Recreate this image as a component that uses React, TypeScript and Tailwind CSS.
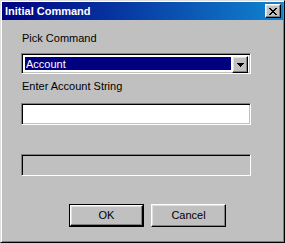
import React from 'react';

const font = "font-['Liberation_Sans',Arial,sans-serif]";

const raised =
  'border border-t-white border-l-white border-r-black border-b-black shadow-[inset_-1px_-1px_0_#808080,inset_1px_1px_0_#dfdfdf] bg-[#c0c0c0]';

const sunken =
  'border border-t-[#808080] border-l-[#808080] border-r-white border-b-white shadow-[inset_1px_1px_0_#000,inset_-1px_-1px_0_#c0c0c0]';

const CloseIcon = () => (
  <svg width="8" height="7" viewBox="0 0 8 7" shapeRendering="crispEdges">
    <path
      d="M0 0h2v1H0zM6 0h2v1H6zM1 1h2v1H1zM5 1h2v1H5zM2 2h4v1H2zM3 3h2v1H3zM2 4h4v1H2zM1 5h2v1H1zM5 5h2v1H5zM0 6h2v1H0zM6 6h2v1H6z"
      fill="#000"
    />
  </svg>
);

const DownArrow = () => (
  <svg width="7" height="4" viewBox="0 0 7 4" shapeRendering="crispEdges">
    <path d="M0 0h7v1H0zM1 1h5v1H1zM2 2h3v1H2zM3 3h1v1H3z" fill="#000" />
  </svg>
);

export default function App() {
  return (
    <div
      className={`${font} w-[285px] h-[243px] bg-[#c0c0c0] text-[11px] text-black flex flex-col p-px border border-t-[#dfdfdf] border-l-[#dfdfdf] border-r-black border-b-black shadow-[inset_1px_1px_0_#fff,inset_-1px_-1px_0_#808080]`}
    >
      {/* title bar */}
      <div className="h-[18px] flex items-center justify-between pl-[3px] pr-[2px] bg-[linear-gradient(to_right,#000080,#1084d0)]">
        <span className="text-white font-bold text-[11px] leading-none">Initial Command</span>
        <button className={`${raised} w-4 h-[14px] flex items-center justify-center`}>
          <CloseIcon />
        </button>
      </div>

      <div className="flex flex-col pl-[19px]">
        <div className="mt-[12px] h-[13px] leading-[13px] pl-px">Pick Command</div>

        <div className={`${sunken} mt-[8px] w-[230px] h-[21px] p-[2px] bg-white flex`}>
          <div className="flex-1 m-px bg-[#000080] text-white leading-[15px] pl-[1px]">Account</div>
          <div className={`${raised} w-4 h-[17px] flex items-center justify-center`}>
            <DownArrow />
          </div>
        </div>

        <div className="mt-[6px] h-[13px] leading-[13px] pl-px">Enter Account String</div>

        <div className={`${sunken} mt-[10px] w-[230px] h-[22px] bg-white`} />

        <div className={`${sunken} mt-[29px] w-[230px] h-[22px] bg-[#c0c0c0]`} />

        <div className="mt-[28px] ml-[48px] flex gap-[7px]">
          <div className="border border-black">
            <button className={`${raised} w-[73px] h-[21px] flex items-center justify-center`}>OK</button>
          </div>
          <button className={`${raised} w-[75px] h-[23px] flex items-center justify-center`}>Cancel</button>
        </div>
      </div>
    </div>
  );
}
